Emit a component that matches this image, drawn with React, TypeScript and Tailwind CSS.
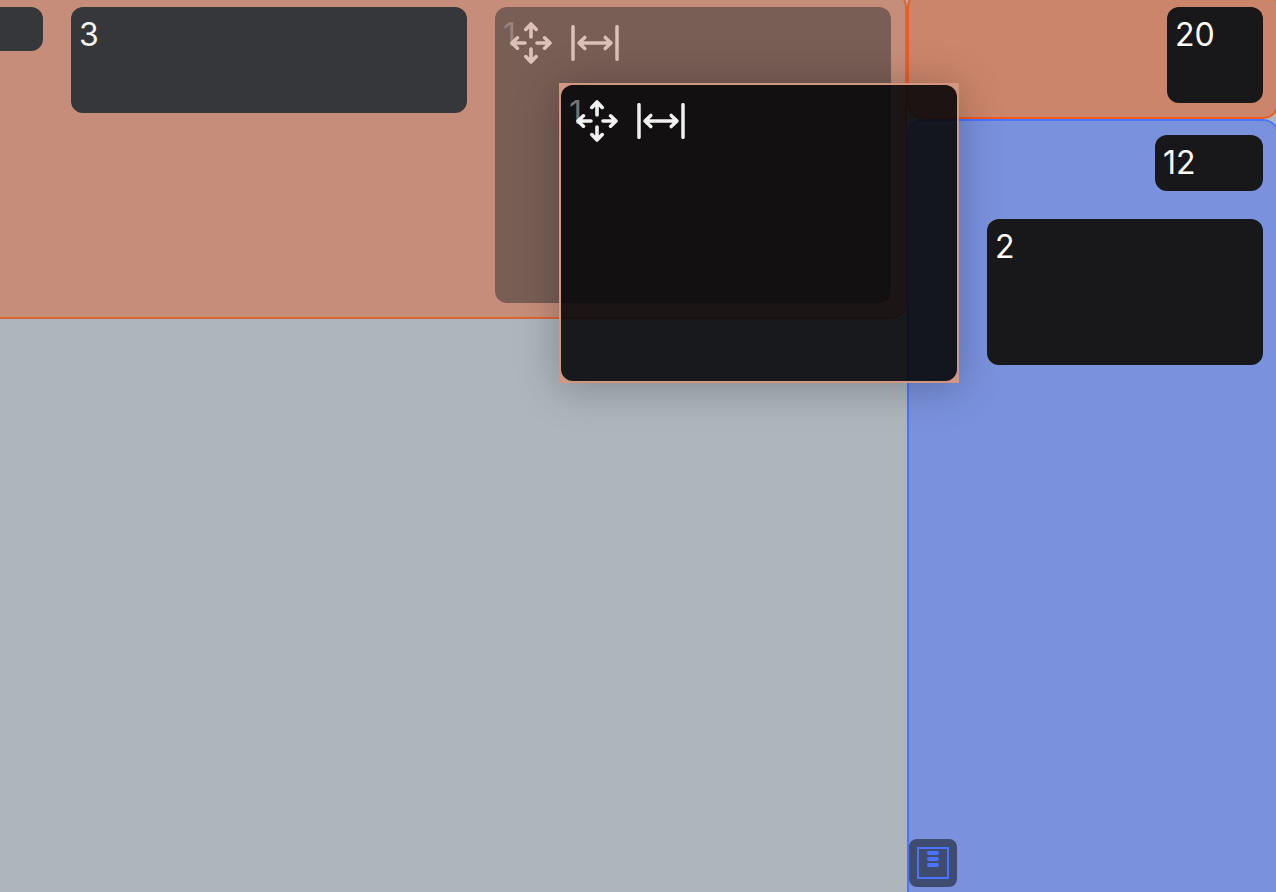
import type { ReactNode } from "react";

function Tile({ label, className }: { label?: string; className: string }) {
  return (
    <div
      className={`shrink-0 rounded-xl px-2 pt-2 text-[32px] leading-10 ${className}`}
    >
      {label}
    </div>
  );
}

function MoveIcon() {
  return (
    <svg
      width="42"
      height="42"
      viewBox="0 0 42 42"
      fill="none"
      stroke="currentColor"
      strokeWidth="3.6"
      strokeLinecap="round"
      strokeLinejoin="round"
      aria-hidden="true"
    >
      <path d="M21 15V2.4M15.8 7.4L21 2L26.2 7.4" />
      <path d="M21 27V39.6M15.8 34.6L21 40L26.2 34.6" />
      <path d="M15 21H2.4M7.4 15.8L2 21L7.4 26.2" />
      <path d="M27 21H39.6M34.6 15.8L40 21L34.6 26.2" />
    </svg>
  );
}

function ResizeIcon() {
  return (
    <svg
      width="48"
      height="36"
      viewBox="0 0 48 36"
      fill="none"
      stroke="currentColor"
      strokeWidth="3.5"
      strokeLinecap="round"
      strokeLinejoin="round"
      aria-hidden="true"
    >
      <path d="M2 1.7V34.3M46 1.7V34.3" />
      <path d="M8 18H40M13.8 12.4L8 18L13.8 23.6M34.2 12.4L40 18L34.2 23.6" />
    </svg>
  );
}

function ActiveTile({
  className,
  labelClass,
}: {
  className: string;
  labelClass: string;
}) {
  return (
    <div
      className={`relative h-[296px] w-[396px] shrink-0 rounded-xl px-2 pt-2 text-[32px] leading-10 ${className}`}
    >
      <span className={labelClass}>1</span>
      <div className="absolute left-[15px] top-[15px] flex items-center gap-[19px]">
        <button type="button" aria-label="Move">
          <MoveIcon />
        </button>
        <button type="button" aria-label="Resize">
          <ResizeIcon />
        </button>
      </div>
    </div>
  );
}

function Zone({
  children,
  className,
}: {
  children: ReactNode;
  className: string;
}) {
  return (
    <section className={`flex gap-7 rounded-2xl border-2 p-3.5 ${className}`}>
      {children}
    </section>
  );
}

export default function App() {
  return (
    <main className="relative flex h-screen overflow-hidden bg-[#adb5bd] font-['Inter',sans-serif] text-white">
      <div className="-ml-4 -mt-[9px] min-w-0 flex-1">
        <Zone className="items-start justify-end border-[#dd6437] bg-[#c68e7a]">
          <Tile className="h-11 w-24 bg-[#36373a]" />
          <Tile
            label="3"
            className="h-[106px] w-[396px] bg-[#36373a] text-[#f4f4f4]"
          />
          <ActiveTile
            className="bg-[#795e55] text-[#dcc1b8]"
            labelClass="text-[#9b8177]"
          />
        </Zone>
      </div>

      <div className="-mb-4 -mr-[3px] -mt-[9px] flex w-[372px] shrink-0 flex-col">
        <Zone className="items-start justify-end border-[#ef5a1c] bg-[#cb856b]">
          <Tile label="20" className="h-24 w-24 bg-[#18181a]" />
        </Zone>
        <Zone className="relative flex-1 flex-col items-end border-[#4a74ff] bg-[#7a91dd]">
          <Tile label="12" className="h-14 w-[108px] bg-[#18181a]" />
          <Tile label="2" className="z-10 h-[146px] w-[276px] bg-[#18181a]" />
          <button
            type="button"
            aria-label="Zone options"
            className="absolute bottom-[19px] left-0 rounded-lg bg-[#404b70] p-2"
          >
            <span className="flex size-8 flex-col items-center gap-0.5 border-2 border-[#4a74ff] pt-0.5">
              <span className="h-1 w-3 rounded-full bg-[#4a74ff]" />
              <span className="h-1 w-3 rounded-full bg-[#4a74ff]" />
              <span className="h-1 w-3 rounded-full bg-[#4a74ff]" />
            </span>
          </button>
        </Zone>
      </div>

      <div className="absolute right-[317px] top-[83px] overflow-hidden p-0.5 shadow-[0_4px_40px_rgba(0,0,0,0.26)]">
        <ActiveTile
          className="bg-[#08080a]/90 text-[#f1f1ef] ring-8 ring-[#d3967f]"
          labelClass="text-[#757372]"
        />
      </div>
    </main>
  );
}
